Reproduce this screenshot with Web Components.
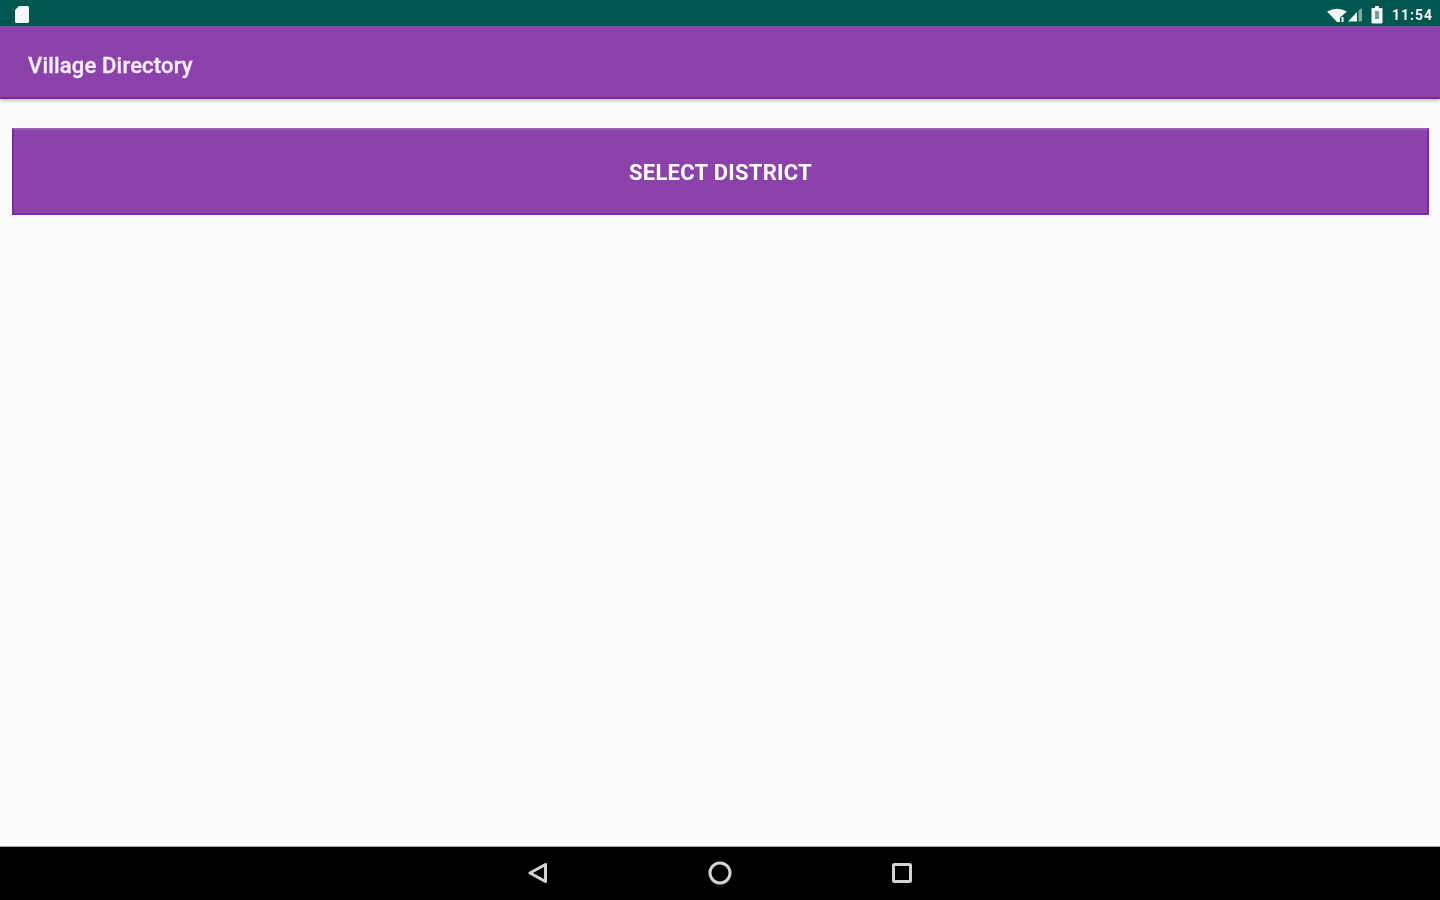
<!DOCTYPE html>
<html>
<head>
<meta charset="utf-8">
<title>Village Directory</title>
<style>
  html, body { margin: 0; height: 100%; }
  body { height: 900px; overflow: hidden; display: flex; flex-direction: column; background: #fafafa; font-family: Roboto, "Liberation Sans", sans-serif; }
</style>
</head>
<body>
<status-bar time="11:54"></status-bar>
<app-bar>Village Directory</app-bar>
<main-area>
  <wide-button>SELECT DISTRICT</wide-button>
</main-area>
<nav-bar></nav-bar>

<script>
class StatusBar extends HTMLElement {
    constructor() {
        super();
        this.attachShadow({mode: "open"});
        const time = this.getAttribute('time') || '';
        this.shadowRoot.innerHTML = `
        <style>
        :host { display: flex; align-items: center; justify-content: space-between; height: 26px; flex: none; background: #00574f; color: #f2f7f6; padding: 3px 7px 0 14px; box-sizing: border-box; }
        .right, .file { display: flex; align-items: center; filter: blur(.6px); }
        svg { display: block; }
        .time { font: 700 14px/20px Roboto, sans-serif; letter-spacing: 1px; margin-left: 9px; }
        .wifi { margin-right: 1px; }
        .sig { margin-left: -3px; }
        .bat { margin-left: 8px; }
        </style>
        <div class="file"><svg width="16" height="17" viewBox="0 0 16 17"><path fill="#f4f7f6" d="M5 0h8.500a1.500 1.500 0 0 1 1.500 1.500v14a1.500 1.500 0 0 1-1.500 1.500h-11a1.500 1.500 0 0 1-1.500-1.500V4z"/></svg></div>
        <div class="right">
          <svg class="wifi" width="22" height="16" viewBox="0 0 22 16"><path fill="#f4f7f6" d="M0 4.500Q10-1 20 4.500L13 10.500V15H10z"/><rect x="14.500" y="10" width="2" height="5" fill="#f4f7f6"/></svg>
          <svg class="sig" width="16" height="14" viewBox="0 0 16 14"><path fill="#f4f7f6" d="M1 13.500L10 4v9.500z"/><path fill="#7fa9a4" d="M11.500 2.500L15 0v13.500h-3.500z"/></svg>
          <svg class="bat" width="12" height="18" viewBox="0 0 12 18"><path fill="#f4f7f6" d="M4 0h4v2h2.500A1 1 0 0 1 11.500 3v13.500a1 1 0 0 1-1 1h-9a1 1 0 0 1-1-1V3a1 1 0 0 1 1-1H4z"/><rect x="4" y="5" width="4" height="8" fill="#6f9d98"/></svg>
          <span class="time">${time}</span>
        </div>`;
    }
}
customElements.define('status-bar', StatusBar);

class AppBar extends HTMLElement {
    constructor() {
        super();
        this.attachShadow({mode: "open"});
        this.shadowRoot.innerHTML = `
        <style>
        :host { display: flex; align-items: center; height: 73px; flex: none; box-sizing: border-box; padding: 8px 0 0 28px; background: #8b42aa; border-bottom: 2px solid #8423a6; box-shadow: 0 2px 3px rgba(0,0,0,.22); color: #f6eefa; font: 500 22px Roboto, sans-serif; letter-spacing: .18px; -webkit-text-stroke: .3px #f6eefa; position: relative; }
        span { filter: blur(.5px); }
        </style>
        <span><slot></slot></span>`;
    }
}
customElements.define('app-bar', AppBar);

class MainArea extends HTMLElement {
    constructor() {
        super();
        this.attachShadow({mode: "open"});
        this.shadowRoot.innerHTML = `
        <style>
        :host { display: block; flex: 1; padding: 29px 11px 0 12px; background: #fafafa; }
        </style>
        <slot></slot>`;
    }
}
customElements.define('main-area', MainArea);

class WideButton extends HTMLElement {
    constructor() {
        super();
        this.attachShadow({mode: "open"});
        this.shadowRoot.innerHTML = `
        <style>
        :host { display: flex; align-items: center; justify-content: center; height: 87px; box-sizing: border-box; padding-top: 1px; background: #8b42aa; border: 2px solid #8423a6; border-top-color: #9a5bb6; color: #fff; font: 700 22px Roboto, sans-serif; letter-spacing: .27px; }
        span { filter: blur(.5px); }
        </style>
        <span><slot></slot></span>`;
    }
}
customElements.define('wide-button', WideButton);

class NavBar extends HTMLElement {
    constructor() {
        super();
        this.attachShadow({mode: "open"});
        this.shadowRoot.innerHTML = `
        <style>
        :host { display: flex; align-items: center; justify-content: center; gap: 158px; height: 53px; flex: none; background: #000; box-shadow: 0 -1px 0 #a9a9a9; padding-bottom: 1px; box-sizing: border-box; }
        svg { display: block; fill: none; stroke: #d4d4d4; stroke-width: 3; filter: blur(.5px); }
        </style>
        <svg width="24" height="24" viewBox="0 0 24 24"><path stroke-linejoin="round" d="M19.500 3.500v17L4 12z"/></svg>
        <svg width="24" height="24" viewBox="0 0 24 24"><circle cx="12" cy="12" r="10"/></svg>
        <svg width="24" height="24" viewBox="0 0 24 24"><rect x="3.500" y="3.500" width="17" height="17" rx="1"/></svg>`;
    }
}
customElements.define('nav-bar', NavBar);
</script>
</body>
</html>
